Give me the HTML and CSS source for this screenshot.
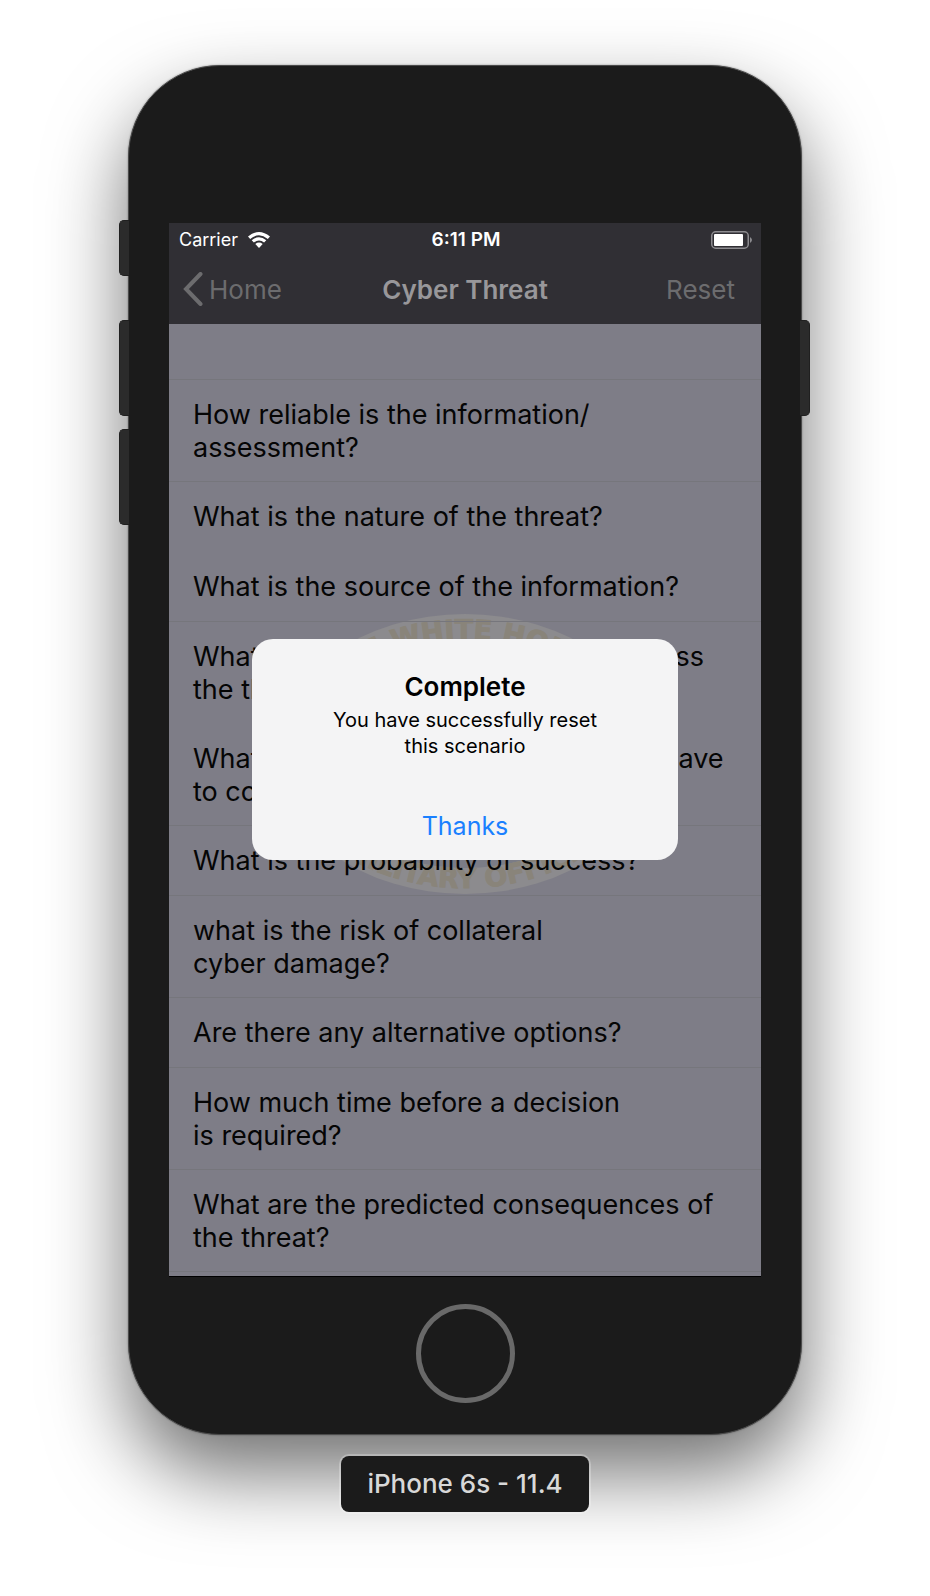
FILE: index.html
```html
<!DOCTYPE html>
<html lang="en">
<head>
<meta charset="utf-8">
<meta name="viewport" content="width=device-width, initial-scale=1">
<title>Cyber Threat</title>
<link rel="stylesheet" href="styles.css">
</head>
<body>
<main class="stage">
  <div class="phone">
    <span class="key key-mute"></span>
    <span class="key key-up"></span>
    <span class="key key-down"></span>
    <span class="key key-power"></span>
    <div class="screen">
      <header class="top">
        <div class="status">
          <div class="carrier">
            <span>Carrier</span>
            <svg class="wifi" viewBox="0 0 22 16" aria-hidden="true">
              <path d="M0 4.600Q11 -4.600 22 4.600L19.800 6.900Q11 -0.400 2.200 6.900Z"/>
              <path d="M3.700 8.300Q11 2.200 18.300 8.300L16.100 10.500Q11 6.400 5.900 10.500Z"/>
              <path d="M7.300 11.900Q11 9 14.700 11.900L11 16Z"/>
            </svg>
          </div>
          <time>6:11 PM</time>
          <svg class="battery" viewBox="0 0 42 18" aria-hidden="true">
            <rect class="case" x="0.750" y="0.750" width="36.500" height="16.500" rx="4"/>
            <rect class="charge" x="3" y="3" width="29" height="12" rx="1"/>
            <path class="case-tip" d="M39 6Q43 9 39 12Z"/>
          </svg>
        </div>
        <nav class="nav">
          <a class="back" href="#home">
            <svg class="chevron" viewBox="0 0 20 34" aria-hidden="true"><path d="M17.500 2L3 17L17.500 32"/></svg>
            <span>Home</span>
          </a>
          <h1>Cyber Threat</h1>
          <button class="reset" type="button">Reset</button>
        </nav>
      </header>
      <div class="body">
        <svg class="seal" viewBox="0 0 378 280" aria-hidden="true">
          <defs>
            <path id="arc-top" d="M24 140A165 115 0 0 1 354 140"/>
            <path id="arc-bottom" d="M6 140A183 134 0 0 0 372 140"/>
          </defs>
          <ellipse class="seal-ring" cx="189" cy="140" rx="189" ry="140"/>
          <ellipse class="seal-core" cx="189" cy="140" rx="158" ry="114"/>
          <text><textPath href="#arc-top" startOffset="50%">THE WHITE HOUSE</textPath></text>
          <text><textPath href="#arc-bottom" startOffset="50%">MILITARY OFFICE</textPath></text>
        </svg>
        <ul class="list">
          <li class="blank"></li>
          <li>How reliable is the information/<br>assessment?</li>
          <li class="bare">What is the nature of the threat?</li>
          <li>What is the source of the information?</li>
          <li class="bare">What resources are available to address<br>the threat?</li>
          <li>What resources would the President have<br>to counter the threat?</li>
          <li>What is the probability of success?</li>
          <li>what is the risk of collateral<br>cyber damage?</li>
          <li>Are there any alternative options?</li>
          <li>How much time before a decision<br>is required?</li>
          <li>What are the predicted consequences of<br>the threat?</li>
        </ul>
      </div>
      <div class="alert" role="alertdialog" aria-labelledby="alert-title" aria-describedby="alert-text">
        <h2 id="alert-title">Complete</h2>
        <p id="alert-text">You have successfully reset<br>this scenario</p>
        <button type="button">Thanks</button>
      </div>
    </div>
    <button class="home" type="button" aria-label="Home button"></button>
  </div>
  <div class="device">iPhone 6s - 11.4</div>
</main>
</body>
</html>
```
FILE: styles.css
```css
* { box-sizing: border-box; }
body { margin: 0; background: #fff; font-family: Inter, "Liberation Sans", sans-serif; }
h1, h2, p, ul { margin: 0; padding: 0; }
button { font: inherit; border: 0; background: none; padding: 0; }
.stage { display: flex; flex-direction: column; align-items: center; padding: 65px 128px 84px; overflow: hidden; }
.phone { position: relative; width: 100%; max-width: 674px; padding: 157px 40px 31px; border: 1px solid #4a4a4a; border-radius: 92px; background: #1b1b1b; box-shadow: 0 38px 80px rgba(0, 0, 0, .56), 0 0 2px rgba(0, 0, 0, .4); display: flex; flex-direction: column; align-items: center; }
.key { position: absolute; left: -10px; width: 10px; background: #2b2b2b; border: 1px solid #202020; border-right: 0; border-radius: 5px 0 0 5px; }
.key-mute { top: 154px; height: 56px; }
.key-up { top: 254px; height: 96px; }
.key-down { top: 363px; height: 96px; }
.key-power { left: auto; right: -9px; top: 254px; height: 96px; border: 1px solid #202020; border-left: 0; border-radius: 0 5px 5px 0; }
.screen { position: relative; width: 100%; background: #7e7d87; overflow: hidden; box-shadow: 0 1px 0 #000; }
.top { height: 101px; background: #302f34; }
.status { display: grid; grid-template-columns: 1fr auto 1fr; align-items: center; height: 33px; padding: 0 8px 0 10px; font-size: 18px; color: #fff; }
.carrier { display: flex; align-items: center; gap: 10px; }
.wifi { width: 22px; height: 16px; fill: #fff; }
.status time { font-size: 19px; font-weight: 600; }
.battery { width: 42px; height: 18px; justify-self: end; }
.case { fill: none; stroke: #8c8b8f; stroke-width: 1.5; }
.case-tip { fill: #8c8b8f; }
.charge { fill: #fff; }
.nav { display: grid; grid-template-columns: 1fr auto 1fr; align-items: center; height: 66px; padding: 0 14px; font-size: 26px; color: #6c6c6e; }
.back { display: flex; align-items: center; gap: 6px; color: inherit; text-decoration: none; }
.chevron { width: 20px; height: 34px; fill: none; stroke: #6c6c6e; stroke-width: 4; stroke-linecap: round; }
.nav h1 { font-size: 26px; font-weight: 600; color: #98979a; }
.reset { justify-self: end; margin-right: 12px; color: inherit; }
.body { position: relative; }
.list { position: relative; list-style: none; font-size: 27px; line-height: 33px; color: #050505; padding-bottom: 4px; }
.list li { min-height: 70px; padding: 18px 0 17px 24px; border-bottom: 1px solid #76767c; white-space: nowrap; }
.list .blank { min-height: 56px; padding: 0; }
.list .bare { border-bottom-color: transparent; }
.seal { position: absolute; left: 50%; top: 290px; width: 378px; height: 280px; margin-left: -189px; }
.seal-ring { fill: #8c8b8e; }
.seal-core { fill: #7b7c86; }
.seal text { font-family: "DejaVu Sans", sans-serif; font-weight: 700; font-size: 27px; fill: #89847a; stroke: #89847a; stroke-width: 1; text-anchor: middle; }
.alert { position: absolute; left: 50%; top: 416px; width: 426px; margin-left: -213px; padding: 31px 20px 16px; border-radius: 21px; background: #f4f4f5; color: #000; text-align: center; display: flex; flex-direction: column; align-items: center; }
.alert h2 { font-size: 26px; line-height: 34px; font-weight: 600; }
.alert p { font-size: 20px; line-height: 26px; margin-top: 3px; }
.alert button { font-size: 25px; line-height: 36px; margin-top: 49px; color: #1a80ff; }
.home { width: 99px; height: 99px; margin-top: 28px; border: 5px solid #696969; border-radius: 50%; }
.device { margin-top: 21px; padding: 11px 26px; border-radius: 8px; background: #1b1b1b; color: #d8d8d8; font-size: 26px; line-height: 34px; font-weight: 500; position: relative; box-shadow: 0 0 0 2px rgba(255, 255, 255, .25); }
```
